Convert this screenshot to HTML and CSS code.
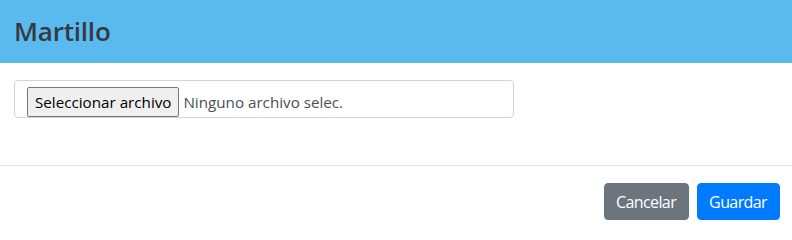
FILE: index.html
```html
<!DOCTYPE html>
<html lang="es">
<head>
<meta charset="utf-8">
<link rel="stylesheet" href="styles.css">
</head>
<body>
<div class="modal">
  <div class="modal-header">
    <h4 class="modal-title">Martillo</h4>
  </div>
  <div class="modal-body">
    <div class="file-input">
      <span class="file-btn">Seleccionar archivo</span>
      <span class="file-name">Ninguno archivo selec.</span>
    </div>
  </div>
  <div class="modal-footer">
    <button class="btn btn-secondary">Cancelar</button>
    <button class="btn btn-primary">Guardar</button>
  </div>
</div>
</body>
</html>
```
FILE: styles.css
```css
* { box-sizing: border-box; }
html, body { margin: 0; padding: 0; background: #fff; }
body {
  font-family: "Open Sans", "Noto Sans", "Liberation Sans", sans-serif;
  font-size: 16px;
  color: #212529;
}
.modal { width: 792px; }
.modal-header {
  background: #5bbaed;
  height: 63px;
  padding: 0 14px 2px;
  display: flex;
  align-items: center;
}
.modal-title {
  margin: 0;
  font-size: 26px;
  font-weight: 600;
  color: #343a40;
  letter-spacing: -0.2px;
}
.modal-body {
  padding: 17px 14px 0;
  height: 102px;
}
.file-input {
  width: 500px;
  height: 38px;
  border: 1px solid #ced4da;
  border-radius: 4px;
  display: flex;
  align-items: flex-start;
  padding: 6px 11px 0 12px;
  gap: 4px;
}
.file-btn {
  height: 30px;
  padding: 0 7px;
  border: 1px solid #767676;
  border-radius: 2px;
  background: #efefef;
  color: #000;
  font-size: 15.2px;
  line-height: 28px;
}
.file-name {
  color: #495057;
  font-size: 15.2px;
  line-height: 30px;
}
.modal-footer {
  border-top: 1px solid #dee2e6;
  display: flex;
  justify-content: flex-end;
  gap: 8px;
  padding: 17px 12px 0;
}
.btn {
  font-family: inherit;
  font-size: 16px;
  height: 37px;
  padding: 0 12px 0 11px;
  border: 1px solid transparent;
  border-radius: 4px;
  color: #fff;
  letter-spacing: -0.6px;
}
.btn-secondary { background: #6c757d; border-color: #6c757d; }
.btn-primary { background: #007bff; border-color: #007bff; }
```
